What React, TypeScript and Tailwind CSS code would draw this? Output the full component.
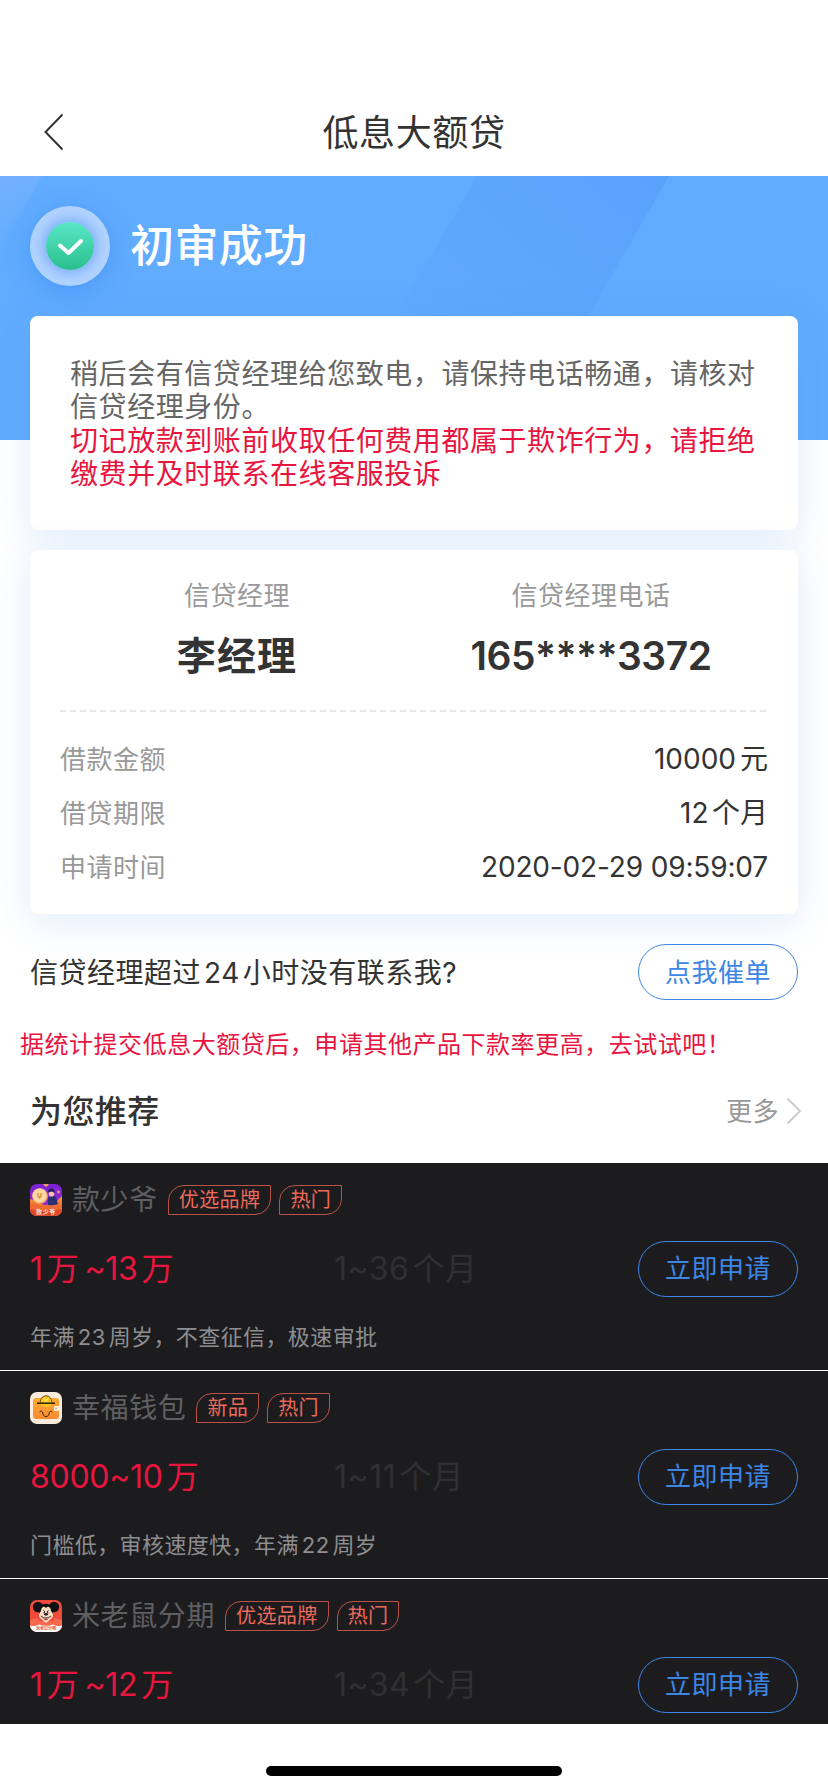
import React from "react";

type Part = { t: string; ml?: number; mr?: number };

type Product = {
  name: string;
  logo: React.ReactNode;
  tags: string[];
  amount: Part[];
  term: string;
  desc?: string;
};

/** Adds a little air between digits and the ideographs around them. */
function Mixed({ text, gap = 4 }: { text: string; gap?: number }) {
  const runs = text.split(/([0-9]+)/).filter(Boolean);
  return (
    <>
      {runs.map((run, i) =>
        /^[0-9]/.test(run) ? (
          <span
            key={i}
            style={{
              marginLeft: i > 0 && !/[~]$/.test(runs[i - 1]) ? gap : 0,
              marginRight: i < runs.length - 1 && !/^[~]/.test(runs[i + 1]) ? gap : 0,
            }}
          >
            {run}
          </span>
        ) : (
          <React.Fragment key={i}>{run}</React.Fragment>
        ),
      )}
    </>
  );
}

function CoinLogo() {
  return (
    <svg className="size-8" viewBox="0 0 32 32">
      <defs>
        <clipPath id="coin-clip"><rect width="32" height="32" rx="7" /></clipPath>
        <linearGradient id="coin-sky" x1="0" y1="0" x2="0" y2="1">
          <stop offset="0" stopColor="#7a22d8" />
          <stop offset="1" stopColor="#a02fc0" />
        </linearGradient>
        <linearGradient id="coin-sand" x1="0" y1="0" x2="0" y2="1">
          <stop offset="0" stopColor="#f79a3c" />
          <stop offset="1" stopColor="#e0472c" />
        </linearGradient>
      </defs>
      <g clipPath="url(#coin-clip)">
        <rect width="32" height="32" fill="url(#coin-sky)" />
        <path d="M13 0h6l-2 2.500h-2z" fill="#f0a050" />
        <path d="M0 15Q8 17 14 21Q23 22 32 12V32H0Z" fill="url(#coin-sand)" />
        <path d="M0 20Q8 20 12 24Q22 26 32 21V32H0Z" fill="#ee6a32" />
        <path d="M0 25Q16 28 32 25V32H0Z" fill="#dd4a2a" />
        <path d="M18 14Q22 10 26 13L28 20Q24 22 18 21Z" fill="#2b2f78" />
        <circle cx="21.500" cy="9.800" r="2.800" fill="#f6c3a6" />
        <path d="M18 8.500Q18 4 22 4.500Q25 5 24.500 9L22 7.500Z" fill="#25235f" />
        <circle cx="28.500" cy="8" r="1.400" fill="#f29a7a" />
        <circle cx="10" cy="12" r="7.800" fill="#eeb06a" />
        <circle cx="9.500" cy="11.500" r="7" fill="#fad7a0" />
        <path d="M8 9v3l1.500 2L11 12V9" fill="none" stroke="#cf8d3e" strokeWidth="1.300" />
      </g>
      <text x="16" y="30" textAnchor="middle" fontSize="6" letterSpacing=".6" fontWeight="500" fill="#fff">款少爷</text>
    </svg>
  );
}

function WalletLogo() {
  return (
    <svg className="size-8" viewBox="0 0 32 32">
      <defs>
        <linearGradient id="wallet-body" x1="0" y1="0" x2="0" y2="1">
          <stop offset="0" stopColor="#ffac33" />
          <stop offset="1" stopColor="#f98a32" />
        </linearGradient>
      </defs>
      <rect width="32" height="32" rx="7" fill="#fdebdd" />
      <rect x="3" y="6" width="26" height="21" rx="3" fill="url(#wallet-body)" />
      <path d="M9.500 11Q10 4 16 3.500Q22 4 22.500 11Q21 14 16 15Q11 14 9.500 11Z" fill="#fbc720" />
      <path d="M10 10.500Q11 4 16 3.700Q21 4 22 10.500" fill="none" stroke="#4b350e" strokeWidth=".8" />
      <path d="M14 6.500l2 2 2-2M16 8v3" stroke="#fff19a" strokeWidth="1" fill="none" />
      <path d="M7 11.200H25" stroke="#2d210e" strokeWidth="1.500" />
      <rect x="24" y="14" width="5" height="5" rx="1" fill="#fff3e6" />
      <circle cx="26" cy="16.500" r=".9" fill="#b8a28c" />
      <path d="M9.500 20q1.500-2.300 3 0 .5 4.500 3.500 4.500t3.500-4.500q1.500-2.300 3 0" fill="none" stroke="#3a2a16" strokeWidth="1" />
    </svg>
  );
}

function MouseLogo() {
  return (
    <svg className="size-8" viewBox="0 0 32 32">
      <defs>
        <clipPath id="mouse-clip"><rect width="32" height="32" rx="7" /></clipPath>
      </defs>
      <g clipPath="url(#mouse-clip)">
        <rect width="32" height="32" fill="#f04a3c" />
        <path d="M0 20l7-2 3 3h12l3-3 7 2v7H0z" fill="#f6694e" />
        <circle cx="8" cy="7" r="5.200" fill="#111" />
        <circle cx="24" cy="7" r="5.200" fill="#111" />
        <circle cx="16" cy="11" r="7.300" fill="#111" />
        <path d="M16 8Q13.500 5.500 11.500 8.500Q11.500 11 9.500 13Q8 16 10.500 18.500L16 23L21.500 18.500Q24 16 22.500 13Q20.500 11 20.500 8.500Q18.500 5.500 16 8Z" fill="#fbdcc3" />
        <path d="M13.500 10.500l1.500 1.500-1.500 1M18.500 10.500L17 12l1.500 1" fill="none" stroke="#111" strokeWidth="1" />
        <ellipse cx="16" cy="14.300" rx="1.800" ry="1.200" fill="#111" />
        <path d="M10.800 16Q16 20 21.200 16" fill="none" stroke="#111" strokeWidth=".8" />
        <path d="M13 18.200Q16 22.500 19 18.200Q16 19.500 13 18.200Z" fill="#c9282d" />
        <path d="M0 25.500Q5 27 9 24.500Q16 27 23 24.500Q27 27 32 25.500V32H0Z" fill="#fff" />
      </g>
      <text x="16" y="30" textAnchor="middle" fontSize="4" fontWeight="700" fill="#e5564a">米老鼠分期</text>
    </svg>
  );
}

const products: Product[] = [
  {
    name: "款少爷",
    logo: <CoinLogo />,
    tags: ["优选品牌", "热门"],
    amount: [{ t: "1", mr: 4 }, { t: "万" }, { t: "~13", ml: 6, mr: 4 }, { t: "万" }],
    term: "1~36个月",
    desc: "年满23周岁，不查征信，极速审批",
  },
  {
    name: "幸福钱包",
    logo: <WalletLogo />,
    tags: ["新品", "热门"],
    amount: [{ t: "8000~10", mr: 4 }, { t: "万" }],
    term: "1~11个月",
    desc: "门槛低，审核速度快，年满22周岁",
  },
  {
    name: "米老鼠分期",
    logo: <MouseLogo />,
    tags: ["优选品牌", "热门"],
    amount: [{ t: "1", mr: 4 }, { t: "万" }, { t: "~12", ml: 6, mr: 4 }, { t: "万" }],
    term: "1~34个月",
  },
];

function PillButton({ children }: { children: React.ReactNode }) {
  return (
    <button className="flex h-14 w-40 shrink-0 items-center justify-center rounded-full border border-[#3d86e6] text-[26px] tracking-[0.5px] text-[#3d86e6]">
      {children}
    </button>
  );
}

function Tag({ children }: { children: React.ReactNode }) {
  return (
    <span className="flex h-[30px] items-center rounded-tl-[16px] rounded-br-[16px] border border-[#b95347] px-[10px] text-[20px] leading-none tracking-[0.4px] text-[#ee6a5b]">
      {children}
    </span>
  );
}

function ProductItem({ product }: { product: Product }) {
  return (
    <li className="h-[208px] shrink-0 border-b border-white px-[30px] pt-[21px]">
      <div className="flex h-8 items-center">
        {product.logo}
        <h3 className="ml-[10px] text-[28px] leading-8 tracking-[0.6px] text-[#5f5f61]">{product.name}</h3>
        <div className="ml-[10px] flex gap-2">
          {product.tags.map((tag) => <Tag key={tag}>{tag}</Tag>)}
        </div>
      </div>
      <div className="mt-[25px] flex h-14 items-center text-[32px] leading-10">
        <p className="w-[304px] tracking-[-0.3px] text-[#e8153f]">
          {product.amount.map((part, i) => (
            <span key={i} style={{ marginLeft: part.ml ?? 0, marginRight: part.mr ?? 0 }}>{part.t}</span>
          ))}
        </p>
        <p className="flex-1 tracking-[0.5px] text-[#303032]"><Mixed text={product.term} gap={3} /></p>
        <PillButton>立即申请</PillButton>
      </div>
      {product.desc && (
        <p className="mt-[25px] text-[22px] leading-[30px] tracking-[0.4px] text-[#8e8e90]">
          <Mixed text={product.desc} gap={3} />
        </p>
      )}
    </li>
  );
}

function DetailRow({ label, children }: { label: string; children: React.ReactNode }) {
  return (
    <div className="flex h-[54px] items-center justify-between">
      <dt className="text-[26px] tracking-[0.5px] text-[#999]">{label}</dt>
      <dd className="text-[28px] text-[#333]">{children}</dd>
    </div>
  );
}

export default function App() {
  return (
    <div className="flex h-[1792px] w-[828px] flex-col overflow-hidden bg-white font-['Inter','Noto_Sans_CJK_SC',sans-serif] text-[#333]">
      <header className="grid h-[176px] shrink-0 grid-cols-[1fr_auto_1fr] items-center px-[43px] pt-[88px]">
        <svg className="h-[38px] w-[22px]" viewBox="0 0 22 38" fill="none" stroke="#333" strokeWidth="2">
          <path d="M19.500 1.500L2.500 19L19.500 36.500" />
        </svg>
        <h1 className="pt-0.5 text-[36px] leading-[44px] tracking-[0.6px]">低息大额贷</h1>
      </header>

      <section className="relative h-[264px] shrink-0 bg-[#61acfe]">
        <svg className="absolute inset-0 h-full w-full" viewBox="0 0 828 264">
          <defs>
            <linearGradient id="band" gradientUnits="userSpaceOnUse" x1="640" y1="0" x2="460" y2="200">
              <stop offset="0" stopColor="#5ba2fd" />
              <stop offset="1" stopColor="#60aafe" />
            </linearGradient>
            <linearGradient id="corner" x1="0" y1="0" x2="0.300" y2="1">
              <stop offset="0" stopColor="#76b0ff" />
              <stop offset="1" stopColor="#61acfe" />
            </linearGradient>
          </defs>
          <path d="M477 0H669L517 264H325Z" fill="url(#band)" />
          <path d="M0 0H42L0 74Z" fill="url(#corner)" />
        </svg>
        <div className="relative flex items-center gap-5 px-[30px] pt-[30px]">
          <div className="flex size-20 items-center justify-center rounded-full bg-[#b3d4ff] shadow-[0_6px_24px_rgba(55,130,240,0.45)]">
            <div className="flex size-12 items-center justify-center rounded-full bg-linear-to-b from-[#58e8c8] to-[#29bf8d] shadow-[0_0_16px_rgba(50,125,245,0.7)]">
              <svg className="h-6 w-8" viewBox="0 0 32 24" fill="none" stroke="#fff" strokeWidth="4" strokeLinecap="round" strokeLinejoin="round">
                <path d="M6 11.500L14.500 19L27 7" />
              </svg>
            </div>
          </div>
          <h2 className="text-[44px] leading-[56px] font-medium tracking-[0.4px] text-white">初审成功</h2>
        </div>
      </section>

      <main className="relative -mt-[124px] flex shrink-0 flex-col gap-5 px-[30px]">
        <section className="h-[214px] rounded-lg bg-white px-10 pt-[42px] text-[28px] leading-[33.4px] tracking-[0.57px] shadow-[0_8px_40px_rgba(61,134,230,0.16)]">
          <p className="text-[#666]">稍后会有信贷经理给您致电，请保持电话畅通，请核对信贷经理身份。</p>
          <p className="text-[#e8153f]">切记放款到账前收取任何费用都属于欺诈行为，请拒绝缴费并及时联系在线客服投诉</p>
        </section>

        <section className="h-[364px] rounded-lg bg-white px-[30px] shadow-[0_8px_40px_rgba(61,134,230,0.16)]">
          <div className="grid h-[160px] grid-cols-2 pt-[28px] text-center">
            <div>
              <div className="text-[26px] leading-9 tracking-[0.5px] text-[#999]">信贷经理</div>
              <div className="mt-[18px] text-[39px] leading-[48px] font-semibold tracking-[1.100px]">李经理</div>
            </div>
            <div>
              <div className="text-[26px] leading-9 tracking-[0.5px] text-[#999]">信贷经理电话</div>
              <div className="mt-[18px] text-[39px] leading-[48px] font-semibold tracking-[-0.5px]">165****3372</div>
            </div>
          </div>
          <div className="h-0.5 bg-[repeating-linear-gradient(90deg,#e8e8e8_0_6px,transparent_6px_10px)]" />
          <dl className="pt-[20px]">
            <DetailRow label="借款金额"><Mixed text="10000元" gap={4} /></DetailRow>
            <DetailRow label="借贷期限"><Mixed text="12个月" gap={3.5} /></DetailRow>
            <DetailRow label="申请时间"><span className="tracking-[-0.15px]">2020-02-29 09:59:07</span></DetailRow>
          </dl>
        </section>
      </main>

      <section className="relative mt-[30px] flex h-14 shrink-0 items-center justify-between px-[30px]">
        <p className="pt-px text-[28px] tracking-[0.5px]"><Mixed text="信贷经理超过24小时没有联系我?" gap={3} /></p>
        <PillButton>点我催单</PillButton>
      </section>
      <p className="mt-[27px] shrink-0 pl-5 text-[24px] leading-9 tracking-[0.53px] text-[#e8153f]">
        据统计提交低息大额贷后，申请其他产品下款率更高，去试试吧！
      </p>
      <div className="mt-[24px] flex h-12 shrink-0 items-center justify-between pr-[26px] pl-[30px]">
        <h2 className="pt-px text-[32px] font-medium tracking-[0.4px]">为您推荐</h2>
        <a className="flex items-center gap-[7px] text-[26px] tracking-[0.4px] text-[#999]">
          更多
          <svg className="h-7 w-4" viewBox="0 0 16 28" fill="none" stroke="#ccc" strokeWidth="2">
            <path d="M1.500 1.500L14 14L1.500 26.500" />
          </svg>
        </a>
      </div>

      <ul className="mt-[28px] flex h-[561px] shrink-0 flex-col overflow-hidden bg-[#1c1c1e]">
        {products.map((product) => <ProductItem key={product.name} product={product} />)}
      </ul>
      <footer className="flex h-[68px] shrink-0 justify-center pt-[42px]">
        <div className="h-[10px] w-[296px] rounded-full bg-black" />
      </footer>
    </div>
  );
}
